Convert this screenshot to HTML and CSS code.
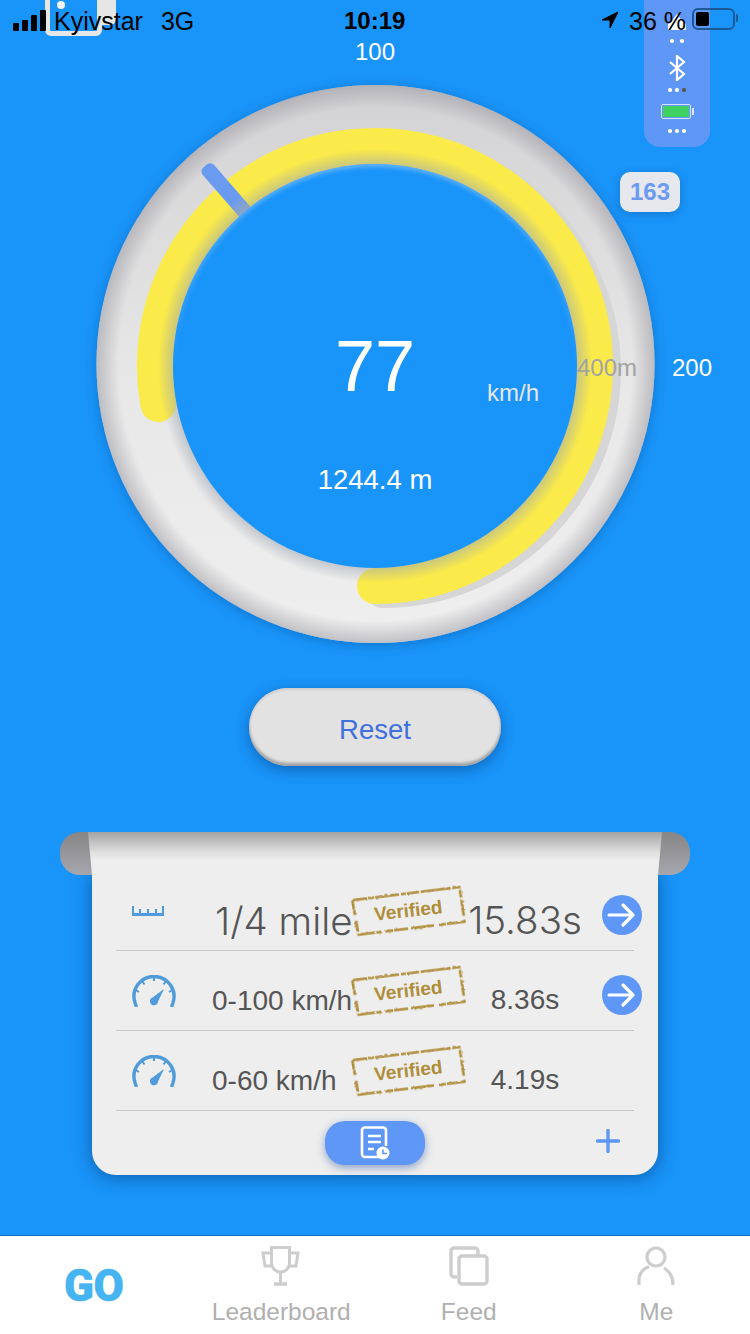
FILE: index.html
```html
<!DOCTYPE html>
<html lang="en">
<head>
   <meta charset="UTF-8">
   <meta name="viewport" content="width=device-width, initial-scale=1.0">
   <title>Drag Meter</title>
   <link rel="stylesheet" href="styles.css">
</head>
<body>
   <svg class="defs" width="0" height="0">
      <defs>
         <filter id="rough" x="-5%" y="-10%" width="110%" height="120%">
            <feTurbulence type="fractalNoise" baseFrequency="0.35" numOctaves="2" seed="4"/>
            <feDisplacementMap in="SourceGraphic" scale="2.500"/>
         </filter>
      </defs>
      <symbol id="dial" viewBox="0 0 44 32">
         <path d="M4.500 32L3.100 28A20 20 0 1 1 40.900 28L39.500 32" fill="none" stroke="currentColor" stroke-width="3.400"/>
         <path d="M22 2v4M10 6l2.500 3.500M34 6l-2.500 3.500M3.500 15l3.500 2M40.500 15l-3.500 2" stroke="currentColor" stroke-width="2"/>
         <path d="M32 14L26 26.500A4 4 0 1 1 20.500 22.500Z" fill="currentColor"/>
      </symbol>
      <symbol id="go-arrow" viewBox="0 0 40 40">
         <circle cx="20" cy="20" r="20" fill="#5e97f6"/>
         <path d="M7 20H31M21 10L31 20L21 30" fill="none" stroke="#fff" stroke-width="3.200" stroke-linecap="round" stroke-linejoin="round"/>
      </symbol>
      <symbol id="stamp-edge" viewBox="0 0 116 54">
         <path d="M4 9.500L112 9.500L113 44.500L6 44.500Z" transform="rotate(-7 58 27)" fill="none" stroke="#b08d3a" stroke-width="2.600" stroke-linejoin="round" stroke-dasharray="15 1 6 1 24 2 5 1 12 2 30 1 9 2 8 2 16 4 20 1 7 5 24 2 14 1 9 2 6 1 18 2 11 6" filter="url(#rough)"/>
      </symbol>
   </svg>

   <div class="screen">
      <div class="hidden-tab"></div>

      <div class="device-panel">
         <svg class="panel-car" width="20" height="18" viewBox="0 0 20 18"><path d="M1 17V11L5 8L10 1L15 8L19 11V17Z" fill="#fff"/></svg>
         <div class="dots dots-wide"><i></i><i></i></div>
         <svg class="panel-bt" width="18" height="26" viewBox="0 0 18 26"><path d="M2 7L16 19L9 25V1L16 7L2 19" fill="none" stroke="#fff" stroke-width="2.200"/></svg>
         <div class="dots"><i></i><i></i><i class="off"></i></div>
         <div class="panel-batt"><span></span></div>
         <div class="dots"><i></i><i></i><i></i></div>
      </div>

      <header class="status-bar">
         <div class="signal"><i></i><i></i><i></i><i></i></div>
         <span class="carrier">Kyivstar</span>
         <span class="network">3G</span>
         <span class="clock">10:19</span>
         <svg class="loc" width="18" height="18" viewBox="0 0 18 18"><path d="M17 1L1 9H9V17Z" fill="#000" stroke="#000" stroke-linejoin="round"/></svg>
         <span class="percent">36 %</span>
         <div class="battery"><span></span></div>
      </header>

      <section class="gauge">
         <svg class="gauge-art" width="750" height="620" viewBox="0 40 750 620">
            <defs>
               <linearGradient id="ringFill" x1="0" y1="0" x2="0" y2="1">
                  <stop offset="0" stop-color="#d2d2d4"/>
                  <stop offset=".55" stop-color="#e8e8e8"/>
                  <stop offset="1" stop-color="#efefef"/>
               </linearGradient>
               <radialGradient id="ringRim">
                  <stop offset=".92" stop-color="#8a8a94" stop-opacity="0"/>
                  <stop offset="1" stop-color="#8a8a94" stop-opacity=".45"/>
               </radialGradient>
               <radialGradient id="arcFade">
                  <stop offset=".93" stop-color="#9aa4b0" stop-opacity=".5"/>
                  <stop offset="1" stop-color="#9aa4b0" stop-opacity="0"/>
               </radialGradient>
               <linearGradient id="needleFill" x1="0" y1="0" x2="0" y2="1">
                  <stop offset="0" stop-color="#6a9bf0"/>
                  <stop offset=".7" stop-color="#6a9bf0"/>
                  <stop offset="1" stop-color="#8ea6d0"/>
               </linearGradient>
               <linearGradient id="holeRim" x1="0" y1="0" x2="0" y2="1">
                  <stop offset="0" stop-color="#8cc6f8" stop-opacity=".7"/>
                  <stop offset=".5" stop-color="#8cc6f8" stop-opacity="0"/>
               </linearGradient>
               <filter id="ringShadow" x="-10%" y="-10%" width="120%" height="120%">
                  <feDropShadow dx="0" dy="2" stdDeviation="6" flood-color="#0a4f96" flood-opacity=".45"/>
               </filter>
               <filter id="soft" x="-5%" y="-5%" width="110%" height="110%">
                  <feGaussianBlur stdDeviation="2"/>
               </filter>
               <clipPath id="holeClip"><circle cx="375" cy="366" r="202"/></clipPath>
            </defs>
            <circle cx="375.500" cy="364" r="279" fill="url(#ringFill)" filter="url(#ringShadow)"/>
            <circle cx="375.500" cy="364" r="279" fill="url(#ringRim)"/>
            <path d="M375 586A220 220 0 0 0 375 146" transform="translate(8 4)" fill="none" stroke="#d6d6d6" stroke-width="36" stroke-linecap="round"/>
            <path d="M375 586A220 220 0 1 0 158.300 404" fill="none" stroke="#faea4a" stroke-width="36" stroke-linecap="round"/>
            <rect x="-7.500" y="0" width="15" height="66" rx="5" transform="translate(205 166) rotate(-41)" fill="url(#needleFill)"/>
            <circle cx="375" cy="366" r="217" fill="url(#arcFade)"/>
            <circle cx="375" cy="366" r="202" fill="#1994f9"/>
            <g clip-path="url(#holeClip)">
               <circle cx="375" cy="366" r="202" fill="none" stroke="url(#holeRim)" stroke-width="5" filter="url(#soft)"/>
            </g>
         </svg>
         <span class="mark mark-100">100</span>
         <span class="mark mark-200">200</span>
         <span class="mark mark-400">400m</span>
         <span class="mark speed">77</span>
         <span class="mark unit">km/h</span>
         <span class="mark distance">1244.4 m</span>
         <div class="peak">163</div>
      </section>

      <div class="reset-wrap">
         <button class="reset-btn">Reset</button>
      </div>

      <section class="sheet">
         <div class="sheet-roll"></div>
         <div class="sheet-top"></div>
         <div class="sheet-body">
            <div class="run-row big">
               <svg class="ruler" width="32" height="10" viewBox="0 0 32 10"><path d="M0 0h2v7h28V0h2v10H0zM7 3h2v5H7zM15 3h2v5h-2zM23 3h2v5h-2z" fill="#4f9bdc"/></svg>
               <span class="run-name">1/4 mile</span>
               <div class="stamp"><svg width="116" height="54"><use href="#stamp-edge"/></svg><span>Verified</span></div>
               <span class="run-time">15.83s</span>
               <svg class="arrow" width="40" height="40"><use href="#go-arrow"/></svg>
            </div>
            <div class="run-row">
               <svg class="dial" width="44" height="32"><use href="#dial"/></svg>
               <span class="run-name">0-100 km/h</span>
               <div class="stamp"><svg width="116" height="54"><use href="#stamp-edge"/></svg><span>Verified</span></div>
               <span class="run-time">8.36s</span>
               <svg class="arrow" width="40" height="40"><use href="#go-arrow"/></svg>
            </div>
            <div class="run-row">
               <svg class="dial" width="44" height="32"><use href="#dial"/></svg>
               <span class="run-name">0-60 km/h</span>
               <div class="stamp"><svg width="116" height="54"><use href="#stamp-edge"/></svg><span>Verified</span></div>
               <span class="run-time">4.19s</span>
            </div>
            <div class="sheet-foot">
               <button class="history-btn">
                  <svg width="30" height="34" viewBox="0 0 30 34">
                     <path d="M20 31H5A3 3 0 0 1 2 28V4A3 3 0 0 1 5 1.500H23A3 3 0 0 1 26 4V20" fill="none" stroke="#fff" stroke-width="2.600"/>
                     <path d="M8 10H21M8 16H21M8 23H14" stroke="#fff" stroke-width="2.600"/>
                     <circle cx="23" cy="27" r="6.500" fill="#fff"/>
                     <path d="M23 23.500V27.500H27" fill="none" stroke="#5e97f6" stroke-width="1.600"/>
                  </svg>
               </button>
               <svg class="plus" width="24" height="24" viewBox="0 0 24 24"><path d="M12 1.500V22.500M1.500 12H22.500" stroke="#5e97f6" stroke-width="3.400" stroke-linecap="round"/></svg>
            </div>
         </div>
      </section>

      <nav class="tab-bar">
         <a class="tab tab-go">GO</a>
         <a class="tab">
            <svg width="40" height="40" viewBox="0 0 40 40" fill="none" stroke="#cdcdcd" stroke-width="3">
               <path d="M10.500 1.500H28.500V17A9 9 0 0 1 10.500 17Z"/>
               <path d="M10 7H2L4 20H11M29 7H37L35 20H28"/>
               <path d="M19.500 26V37"/>
               <path d="M13 38H26" stroke-width="3.600"/>
            </svg>
            <span>Leaderboard</span>
         </a>
         <a class="tab">
            <svg width="40" height="40" viewBox="0 0 40 40" fill="none" stroke="#cdcdcd" stroke-width="3.400">
               <path d="M8 31H5A3 3 0 0 1 2 28V5A3 3 0 0 1 5 2H26A3 3 0 0 1 29 5V9"/>
               <rect x="10" y="10" width="28" height="28" rx="3"/>
            </svg>
            <span>Feed</span>
         </a>
         <a class="tab">
            <svg width="40" height="40" viewBox="0 0 40 40" fill="none" stroke="#cdcdcd" stroke-width="3.200">
               <circle cx="20" cy="11" r="9"/>
               <path d="M3 39V34C3 28 7 23 13 20.500M28 22C33 25 37 30 37 39"/>
            </svg>
            <span>Me</span>
         </a>
      </nav>
   </div>
</body>
</html>
```

FILE: styles.css
```css
* {
   box-sizing: border-box;
}

body {
   margin: 0;
   font-family: "Liberation Sans", Arial, sans-serif;
   background-color: #1994f9;
}

.defs {
   position: absolute;
}

.screen {
   position: relative;
   width: 750px;
   height: 1334px;
   display: flex;
   flex-direction: column;
   overflow: hidden;
}

/* status bar */
.status-bar {
   position: relative;
   height: 40px;
   display: flex;
   align-items: center;
   padding: 2px 0 0 13px;
   color: #000;
   font-size: 25px;
}

.signal {
   display: flex;
   align-items: flex-end;
   gap: 3px;
   height: 21px;
   width: 33px;
   margin-top: -2px;
}

.signal i {
   width: 6px;
   background: #000;
   border-radius: 1px;
}

.signal i:nth-child(1) { height: 8px; }
.signal i:nth-child(2) { height: 11px; }
.signal i:nth-child(3) { height: 16px; }
.signal i:nth-child(4) { height: 21px; }

.carrier {
   margin-left: 8px;
}

.network {
   margin-left: 18px;
}

.clock {
   position: absolute;
   left: 344px;
   font-size: 24px;
   font-weight: bold;
}

.loc {
   margin: -2px 10px 0 auto;
}

.percent {
   margin-right: 6px;
}

.battery {
   position: relative;
   width: 43px;
   height: 22px;
   margin: -4px 15px 0 0;
   padding: 2px;
   border: 2px solid #1b5a96;
   border-radius: 6px;
}

.battery::after {
   content: "";
   position: absolute;
   right: -5px;
   top: 4px;
   width: 2px;
   height: 8px;
   background: #1b5a96;
   border-radius: 0 2px 2px 0;
}

.battery span {
   display: block;
   width: 13px;
   height: 100%;
   background: #000;
   border-radius: 2px;
}

.hidden-tab {
   position: absolute;
   left: 45px;
   top: -6px;
   width: 57px;
   height: 42px;
   border: 5px solid #e6e6e6;
   border-radius: 0 0 6px 6px;
}

.hidden-tab::before {
   content: "";
   position: absolute;
   left: 7px;
   top: 2px;
   width: 8px;
   height: 8px;
   background: #f2f2f2;
   border-radius: 50%;
}

.hidden-tab::after {
   content: "";
   position: absolute;
   left: 47px;
   top: -5px;
   width: 19px;
   height: 31px;
   background: #e6e6e6;
   border-radius: 0 0 6px 0;
}

.device-panel {
   position: absolute;
   left: 644px;
   top: 0;
   width: 66px;
   height: 147px;
   display: flex;
   flex-direction: column;
   align-items: center;
   padding-top: 13px;
   background: #5e97f6;
   border-radius: 0 0 16px 16px;
}

.dots {
   display: flex;
   gap: 3.5px;
   height: 4px;
}

.dots-wide {
   gap: 6.5px;
}

.dots i {
   width: 3.5px;
   height: 3.5px;
   background: #fff;
   border-radius: 50%;
}

.dots i.off {
   background: #555;
}

.panel-car {
   flex: none;
   margin-bottom: 8px;
}

.panel-bt {
   flex: none;
   margin: 12px 0 7px;
}

.panel-batt {
   position: relative;
   width: 30px;
   height: 15px;
   margin: 12px 3px 10px 0;
   padding: 1px;
   border: 1px solid #d8e4f8;
   border-radius: 2px;
}

.panel-batt::after {
   content: "";
   position: absolute;
   right: -4px;
   top: 3px;
   width: 2px;
   height: 7px;
   background: #d8e4f8;
}

.panel-batt span {
   display: block;
   height: 100%;
   background: #3fd161;
}

/* gauge */
.gauge {
   position: relative;
   height: 620px;
   color: #fff;
}

.gauge-art {
   display: block;
}

.mark {
   position: absolute;
   font-size: 24px;
   line-height: 28px;
   transform: translate(-50%, -50%);
   white-space: nowrap;
}

.mark-100 { left: 375px; top: 12px; }
.mark-200 { left: 692px; top: 328px; }
.mark-400 { left: 607px; top: 328px; color: #a3a3a3; }
.speed { left: 375px; top: 326px; font-size: 72px; line-height: 80px; }
.unit { left: 513px; top: 353px; color: #e6e6e6; }
.distance { left: 375px; top: 440px; font-size: 27.5px; }

.peak {
   position: absolute;
   left: 620px;
   top: 132px;
   width: 60px;
   height: 40px;
   line-height: 40px;
   text-align: center;
   font-size: 24px;
   font-weight: bold;
   color: #6c9bf0;
   background: #e6e8ee;
   border-radius: 10px;
   box-shadow: 0 2px 8px rgba(0, 60, 120, 0.3);
}

/* reset */
.reset-wrap {
   display: flex;
   justify-content: center;
   margin-top: 28px;
}

.reset-btn {
   width: 252px;
   height: 78px;
   padding-top: 6px;
   border: none;
   border-radius: 39px;
   font-family: inherit;
   font-size: 27.5px;
   color: #3f70dc;
   background: #e2e2e2;
   box-shadow: inset 0 -3px 3px #a0a0a0, inset 0 2px 2px #cfcfcf, 0 4px 14px rgba(0, 50, 110, 0.45);
}

/* results sheet */
.sheet {
   width: 630px;
   margin: 66px 0 0 60px;
   display: flex;
   flex-direction: column;
}

.sheet-roll {
   position: relative;
   z-index: 1;
   height: 43px;
   margin-bottom: -43px;
   border-radius: 20px;
   background: linear-gradient(#868686, #a6a6ae);
}

.sheet-top {
   position: relative;
   z-index: 2;
   height: 43px;
   margin: 0 28px;
   background: linear-gradient(#a4a4a4, #e2e2e2 50%, #eeeeee 68%);
   clip-path: polygon(0 0, 100% 0, calc(100% - 4px) 100%, 4px 100%);
}

.sheet-body {
   margin: -4px 32px 0;
   padding: 0 24px;
   height: 304px;
   background: #eeeeee;
   border-radius: 0 0 24px 24px;
   box-shadow: 0 2px 18px rgba(0, 40, 90, 0.5);
}

.run-row {
   display: grid;
   grid-template-columns: 96px 138px 116px 118px 50px;
   align-items: center;
   height: 80px;
   border-bottom: 1px solid #c9c9c9;
   color: #555;
   font-size: 28px;
}

.big {
   font-family: Inter, "Liberation Sans", sans-serif;
   font-size: 38.5px;
   font-weight: 300;
}

.big .run-name {
   padding-left: 3px;
}

.ruler,
.dial {
   margin-left: 16px;
   color: #4f9bdc;
}

.run-name {
   padding-top: 20px;
   white-space: nowrap;
}

.run-time {
   padding-top: 18px;
   text-align: center;
   white-space: nowrap;
}

.arrow {
   justify-self: end;
   margin: 8px -8px 0 0;
}

.stamp {
   position: relative;
   width: 116px;
   height: 54px;
   display: flex;
   align-items: center;
   justify-content: center;
   font-family: "Liberation Sans", sans-serif;
}

.stamp svg {
   position: absolute;
   left: 0;
   top: 0;
}

.stamp span {
   font-size: 19px;
   font-weight: bold;
   color: #b08d3a;
   transform: rotate(-6.5deg);
}

.sheet-foot {
   display: grid;
   grid-template-columns: 1fr auto 1fr;
   align-items: center;
   padding-top: 10px;
}

.history-btn {
   grid-column: 2;
   width: 100px;
   height: 44px;
   display: flex;
   align-items: center;
   justify-content: center;
   padding: 0;
   border: none;
   border-radius: 20px;
   background: #5e97f6;
   box-shadow: 0 3px 8px rgba(50, 90, 170, 0.5);
}

.plus {
   grid-column: 3;
   justify-self: end;
   margin: -4px 14px 0 0;
}

/* tab bar */
.tab-bar {
   margin-top: auto;
   height: 99px;
   display: grid;
   grid-template-columns: repeat(4, 1fr);
   background: #fff;
   border-top: 1px solid #0b6fc2;
}

.tab {
   display: flex;
   flex-direction: column;
   align-items: center;
   padding-top: 10px;
   font-size: 24.5px;
   color: #b0b0b0;
}

.tab span {
   margin-top: 12px;
   line-height: 28px;
}

.tab-go {
   justify-content: center;
   padding-top: 2px;
   font-family: Roboto, "Liberation Sans", sans-serif;
   font-size: 44px;
   font-weight: 900;
   letter-spacing: -0.5px;
   color: #45b4f0;
   -webkit-text-stroke: 0.4px #45b4f0;
}
```
